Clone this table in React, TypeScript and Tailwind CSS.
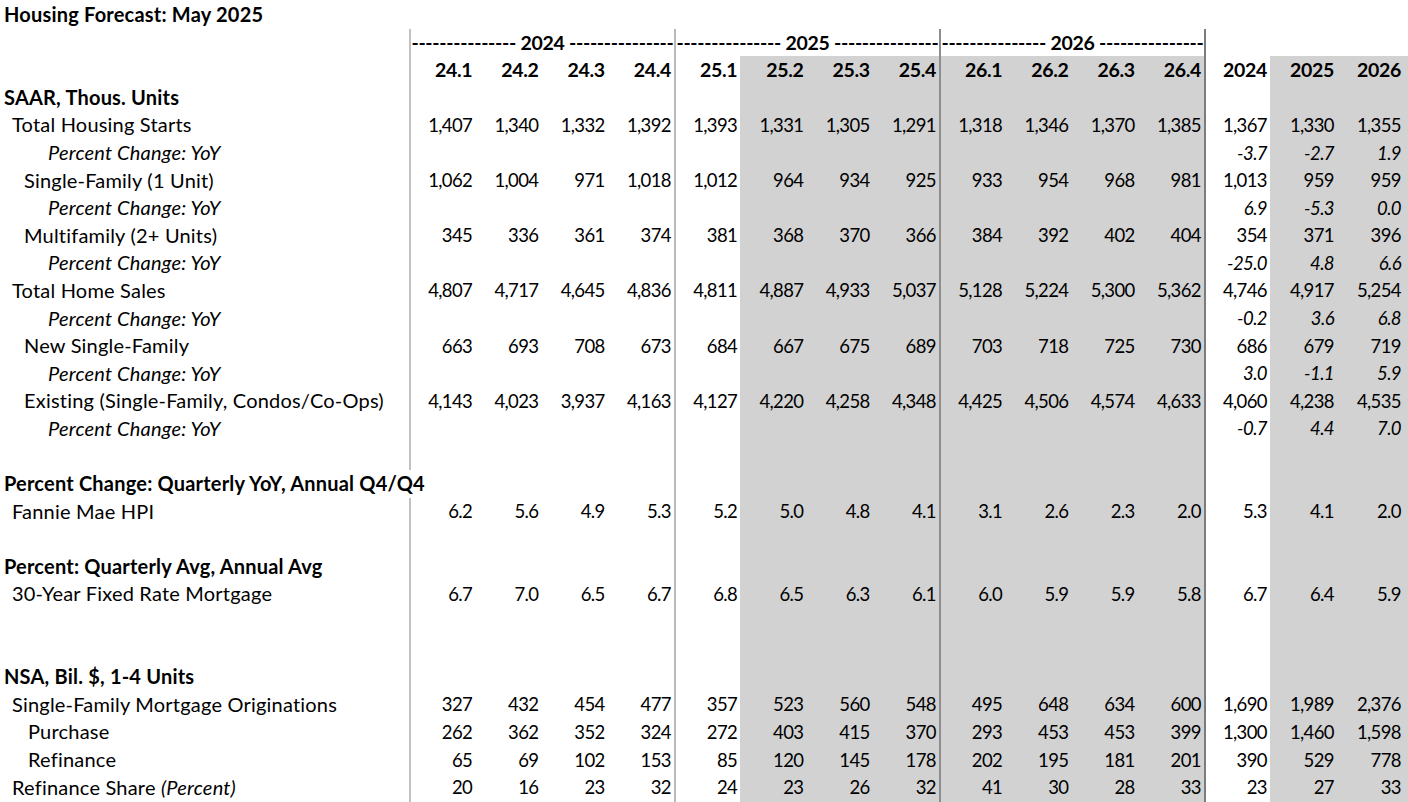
import React from "react";

const COLS = "grid grid-cols-[409px_repeat(12,66.25px)_66px_67px_67px_1fr]";
const QUARTERS = ["24.1", "24.2", "24.3", "24.4", "25.1", "25.2", "25.3", "25.4", "26.1", "26.2", "26.3", "26.4"];
const YEARS = ["2024", "2025", "2026"];
const DASHES = "---------------";

type Row =
  | { kind: "title"; label: string }
  | { kind: "years" }
  | { kind: "quarters" }
  | { kind: "section"; label: string; wide?: boolean }
  | { kind: "data"; label: React.ReactNode; indent: string; values: string[] }
  | { kind: "pct"; values: string[] }
  | { kind: "blank" };

const ROWS: Row[] = [
  { kind: "title", label: "Housing Forecast: May 2025" },
  { kind: "years" },
  { kind: "quarters" },
  { kind: "section", label: "SAAR, Thous. Units" },
  {
    kind: "data",
    label: "Total Housing Starts",
    indent: "pl-[12px]",
    values: ["1,407", "1,340", "1,332", "1,392", "1,393", "1,331", "1,305", "1,291", "1,318", "1,346", "1,370", "1,385", "1,367", "1,330", "1,355"],
  },
  { kind: "pct", values: ["-3.7", "-2.7", "1.9"] },
  {
    kind: "data",
    label: "Single-Family (1 Unit)",
    indent: "pl-[24px]",
    values: ["1,062", "1,004", "971", "1,018", "1,012", "964", "934", "925", "933", "954", "968", "981", "1,013", "959", "959"],
  },
  { kind: "pct", values: ["6.9", "-5.3", "0.0"] },
  {
    kind: "data",
    label: "Multifamily (2+ Units)",
    indent: "pl-[24px]",
    values: ["345", "336", "361", "374", "381", "368", "370", "366", "384", "392", "402", "404", "354", "371", "396"],
  },
  { kind: "pct", values: ["-25.0", "4.8", "6.6"] },
  {
    kind: "data",
    label: "Total Home Sales",
    indent: "pl-[12px]",
    values: ["4,807", "4,717", "4,645", "4,836", "4,811", "4,887", "4,933", "5,037", "5,128", "5,224", "5,300", "5,362", "4,746", "4,917", "5,254"],
  },
  { kind: "pct", values: ["-0.2", "3.6", "6.8"] },
  {
    kind: "data",
    label: "New Single-Family",
    indent: "pl-[24px]",
    values: ["663", "693", "708", "673", "684", "667", "675", "689", "703", "718", "725", "730", "686", "679", "719"],
  },
  { kind: "pct", values: ["3.0", "-1.1", "5.9"] },
  {
    kind: "data",
    label: "Existing (Single-Family, Condos/Co-Ops)",
    indent: "pl-[24px]",
    values: ["4,143", "4,023", "3,937", "4,163", "4,127", "4,220", "4,258", "4,348", "4,425", "4,506", "4,574", "4,633", "4,060", "4,238", "4,535"],
  },
  { kind: "pct", values: ["-0.7", "4.4", "7.0"] },
  { kind: "blank" },
  { kind: "section", label: "Percent Change: Quarterly YoY, Annual Q4/Q4", wide: true },
  {
    kind: "data",
    label: "Fannie Mae HPI",
    indent: "pl-[12px]",
    values: ["6.2", "5.6", "4.9", "5.3", "5.2", "5.0", "4.8", "4.1", "3.1", "2.6", "2.3", "2.0", "5.3", "4.1", "2.0"],
  },
  { kind: "blank" },
  { kind: "section", label: "Percent: Quarterly Avg, Annual Avg" },
  {
    kind: "data",
    label: "30-Year Fixed Rate Mortgage",
    indent: "pl-[12px]",
    values: ["6.7", "7.0", "6.5", "6.7", "6.8", "6.5", "6.3", "6.1", "6.0", "5.9", "5.9", "5.8", "6.7", "6.4", "5.9"],
  },
  { kind: "blank" },
  { kind: "blank" },
  { kind: "section", label: "NSA, Bil. $, 1-4 Units" },
  {
    kind: "data",
    label: "Single-Family Mortgage Originations",
    indent: "pl-[12px]",
    values: ["327", "432", "454", "477", "357", "523", "560", "548", "495", "648", "634", "600", "1,690", "1,989", "2,376"],
  },
  {
    kind: "data",
    label: "Purchase",
    indent: "pl-[28px]",
    values: ["262", "362", "352", "324", "272", "403", "415", "370", "293", "453", "453", "399", "1,300", "1,460", "1,598"],
  },
  {
    kind: "data",
    label: "Refinance",
    indent: "pl-[28px]",
    values: ["65", "69", "102", "153", "85", "120", "145", "178", "202", "195", "181", "201", "390", "529", "778"],
  },
  {
    kind: "data",
    label: (
      <>
        Refinance Share <span className="italic">(Percent)</span>
      </>
    ),
    indent: "pl-[12px]",
    values: ["20", "16", "23", "32", "24", "23", "26", "32", "41", "30", "28", "33", "23", "27", "33"],
  },
];

// vertical rules: light where they run through white, darker through the grey block
const LINE: Record<number, string> = {
  0: "border-l-2 border-[#c2c2c2]",
  4: "border-l-2 border-[#bababa]",
  8: "border-l-2 border-[#8e8e8e]",
  12: "border-l-2 border-[#7c7c7c]",
};

function cellClass(i: number, skipFirstLine?: boolean) {
  const grey = (i >= 5 && i <= 11) || i >= 13;
  const line = LINE[i] && !(skipFirstLine && i === 0) ? LINE[i] : "";
  return `flex h-full items-center justify-end pr-[3px] whitespace-nowrap ${grey ? "bg-[#d2d2d2]" : ""} ${line}`;
}

function DataCells({
  values,
  header,
  italic,
  skipFirstLine,
}: {
  values: (string | null)[];
  header?: boolean;
  italic?: boolean;
  skipFirstLine?: boolean;
}) {
  return (
    <>
      {Array.from({ length: 16 }).map((_, i) => (
        <div
          key={i}
          className={`${cellClass(i, skipFirstLine)} ${header ? "text-[19.5px] font-bold tracking-[-0.3px]" : ""} ${italic ? "italic" : ""}`}
        >
          {values[i] ?? ""}
        </div>
      ))}
    </>
  );
}

const LABEL = "whitespace-nowrap text-[20px] leading-[27.6px] tracking-[0.2px]";

function TableRow({ row }: { row: Row }) {
  const base = `${COLS} h-[27.6px]`;
  switch (row.kind) {
    case "title":
      return (
        <div className={base}>
          <div className={`${LABEL} pl-[4px] font-bold`}>{row.label}</div>
        </div>
      );
    case "years":
      return (
        <div className={base}>
          <div />
          {YEARS.map((y, k) => (
            <div
              key={y}
              className={`col-span-4 flex items-center justify-center text-[19.5px] font-bold tracking-[-0.3px] whitespace-nowrap ${LINE[k * 4]}`}
            >
              {DASHES} {y} {DASHES}
            </div>
          ))}
          <div className={LINE[12]} />
        </div>
      );
    case "quarters":
      return (
        <div className={base}>
          <div />
          <DataCells values={[...QUARTERS, ...YEARS]} header />
        </div>
      );
    case "section":
      return (
        <div className={base}>
          <div className={`${LABEL} relative z-10 pl-[4px] font-bold`}>{row.label}</div>
          <DataCells values={[]} skipFirstLine={row.wide} />
        </div>
      );
    case "data":
      return (
        <div className={base}>
          <div className={`${LABEL} ${row.indent}`}>{row.label}</div>
          <DataCells values={row.values} />
        </div>
      );
    case "pct":
      return (
        <div className={base}>
          <div className={`${LABEL} pl-[48px] italic`}>Percent Change: YoY</div>
          <DataCells values={[...Array(12).fill(null), ...row.values]} italic />
        </div>
      );
    default:
      return (
        <div className={base}>
          <div />
          <DataCells values={[]} />
        </div>
      );
  }
}

export default function App() {
  return (
    <div className="h-[802px] w-[1408px] overflow-hidden bg-white pt-[1px] font-['Lato',sans-serif] text-[18.5px] leading-none tracking-[-0.6px] text-black">
      {ROWS.map((row, idx) => (
        <TableRow key={idx} row={row} />
      ))}
      <div className={`${COLS} h-[20px]`}>
        <div />
        <DataCells values={[]} />
      </div>
    </div>
  );
}
